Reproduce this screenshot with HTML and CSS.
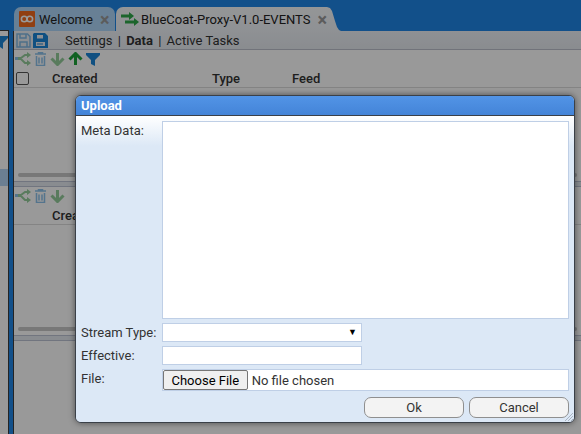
FILE: index.html
```html
<!DOCTYPE html>
<html lang="en">
<head>
    <meta charset="UTF-8">
    <title>Upload</title>
    <link rel="stylesheet" href="styles.css">
</head>
<body>
    <div class="app">
        <div class="side">
            <svg class="side-filter" width="8" height="14" viewBox="0 0 8 14"><path d="M-6 1h14v2l-5 5v6l-3-2V8L-6 3z" fill="#1c86d8"/></svg>
            <div class="side-sel"></div>
        </div>
        <div class="main">
            <div class="tabs">
                <div class="tab tab-welcome">
                    <svg width="16" height="16" viewBox="0 0 16 16"><rect width="16" height="16" rx="1" fill="#f0691e"/><circle cx="5.200" cy="8" r="2.800" fill="none" stroke="#fff" stroke-width="1.600"/><circle cx="10.800" cy="8" r="2.800" fill="none" stroke="#fff" stroke-width="1.600"/></svg>
                    <span class="tab-name">Welcome</span>
                    <span class="tab-x">×</span>
                </div>
                <div class="tab tab-active">
                    <svg width="18" height="14" viewBox="0 0 18 14"><path d="M0 2.500h8V0l5 4-5 4V5.500H0z" fill="#2fa84a"/><path d="M4 8.500h9V6l5 4-5 4v-2.500H4z" fill="#2fa84a"/></svg>
                    <span class="tab-name">BlueCoat-Proxy-V1.0-EVENTS</span>
                    <span class="tab-x">×</span>
                </div>
            </div>
            <div class="content">
                <div class="nav">
                    <svg class="save off" width="15" height="15" viewBox="0 0 15 15"><path d="M1 1h10.500L14 3.500V14H1z M4 1v4h6V1 M4 14V9h7v5" fill="none" stroke="currentColor" stroke-width="1.500"/></svg>
                    <svg class="save" width="15" height="15" viewBox="0 0 15 15"><path d="M1 0h11l3 3v12H0V1z M4 2v3.500h6V2z M3 9v4h9V9z" fill="currentColor" fill-rule="evenodd"/><path d="M4 11h6" stroke="currentColor"/></svg>
                    <span class="nav-link first">Settings</span>
                    <span class="nav-sep">|</span>
                    <b class="nav-link">Data</b>
                    <span class="nav-sep">|</span>
                    <span class="nav-link">Active Tasks</span>
                </div>
                <div class="pane pane-top">
                    <div class="icons">
                        <svg class="off" width="16" height="14" viewBox="0 0 16 14"><path d="M0 5h3v3H0z" fill="#1c86d8"/><path d="M3 6h3l4-3h3M3 7h3l4 4h3" fill="none" stroke="#2e9e3c" stroke-width="2"/><path d="M12 0l4 3-4 3zM12 8l4 3-4 3z" fill="#2e9e3c"/></svg>
                        <svg class="off" width="13" height="14" viewBox="0 0 13 14"><path d="M1 2h11M4.500 2V.5h4V2M2.500 4v9.500h8V4M5 5.500v6M8 5.500v6" fill="none" stroke="#1c86d8" stroke-width="1.500"/></svg>
                        <svg class="off" width="15" height="14" viewBox="0 0 15 14"><path d="M7.500 1v11M1.500 6.500l6 6 6-6" fill="none" stroke="#2e9e3c" stroke-width="3"/></svg>
                        <svg width="15" height="14" viewBox="0 0 15 14"><path d="M7.500 13V2M1.500 7.500l6-6 6 6" fill="none" stroke="#1fa33a" stroke-width="3"/></svg>
                        <svg width="14" height="14" viewBox="0 0 14 14"><path d="M0 1h14v2L9 8v6L5 12V8L0 3z" fill="#1c86d8"/></svg>
                    </div>
                    <div class="head">
                        <span class="check"></span>
                        <span class="col col-created">Created</span>
                        <span class="col col-type">Type</span>
                        <span class="col">Feed</span>
                    </div>
                </div>
                <div class="split"><div class="grip"></div><div class="band"></div></div>
                <div class="pane pane-bottom">
                    <div class="icons">
                        <svg class="off" width="16" height="14" viewBox="0 0 16 14"><path d="M0 5h3v3H0z" fill="#1c86d8"/><path d="M3 6h3l4-3h3M3 7h3l4 4h3" fill="none" stroke="#2e9e3c" stroke-width="2"/><path d="M12 0l4 3-4 3zM12 8l4 3-4 3z" fill="#2e9e3c"/></svg>
                        <svg class="off" width="13" height="14" viewBox="0 0 13 14"><path d="M1 2h11M4.500 2V.5h4V2M2.500 4v9.500h8V4M5 5.500v6M8 5.500v6" fill="none" stroke="#1c86d8" stroke-width="1.500"/></svg>
                        <svg class="off" width="15" height="14" viewBox="0 0 15 14"><path d="M7.500 1v11M1.500 6.500l6 6 6-6" fill="none" stroke="#2e9e3c" stroke-width="3"/></svg>
                    </div>
                    <div class="head head-plain">
                        <span class="col col-created">Created</span>
                    </div>
                </div>
                <div class="split"><div class="grip"></div><div class="band"></div></div>
            </div>
        </div>
    </div>

    <div class="glass"></div>

    <div class="dialog">
        <div class="dialog-title">Upload</div>
        <div class="dialog-body">
            <form class="fields">
                <label class="field-label">Meta Data:</label>
                <textarea class="input meta"></textarea>
                <label class="field-label">Stream Type:</label>
                <div class="input select">▼</div>
                <label class="field-label">Effective:</label>
                <input class="input short" type="text">
                <label class="field-label">File:</label>
                <input class="input file" type="file">
            </form>
            <div class="buttons">
                <button type="button" class="btn">Ok</button>
                <button type="button" class="btn">Cancel</button>
            </div>
        </div>
        <svg class="resize" width="10" height="10" viewBox="0 0 10 10"><path d="M9 1L1 9M9 4L4 9M9 7L7 9" stroke="#a9b4c2" fill="none"/></svg>
    </div>
</body>
</html>
```

FILE: styles.css
```css
html, body {
    margin: 0;
    height: 100%;
    overflow: hidden;
}
body {
    font-family: Roboto, sans-serif;
    font-size: 13px;
    color: #000;
    background-color: #1f85e6;
}
.app {
    display: flex;
    height: 434px;
}
.side {
    width: 8px;
    margin-top: 30px;
    background-color: #fff;
    border-top: 1px solid #3c3c3c;
    border-right: 1px solid #3c3c3c;
    display: flex;
    flex-direction: column;
}
.side-filter {
    margin-top: 4px;
}
.side-sel {
    height: 17px;
    margin-top: 120px;
    background-color: #b3d4f3;
}
.main {
    margin-left: 4px;
    flex: 1;
    min-width: 0;
    display: flex;
    flex-direction: column;
}
.tabs {
    display: flex;
    height: 24px;
    margin-top: 7px;
    margin-left: 1px;
    gap: 1px;
}
.tab {
    display: flex;
    align-items: center;
    border-radius: 7px 7px 0 0;
    font-size: 13px;
    white-space: nowrap;
    padding-left: 5px;
    box-sizing: border-box;
}
.tab-welcome {
    width: 101px;
    background-color: #aed6f8;
    gap: 4px;
}
.tab-active {
    width: 225px;
    background: linear-gradient(#f8fafc, #eef2f7);
    gap: 2px;
    clip-path: polygon(0 0, 211px 0, 214px 1px, 216px 4px, 219px 14px, 221px 20px, 223px 23px, 225px 24px, 0 24px);
}
.tab-name {
    color: #222;
}
.tab-x {
    color: #999;
    font-size: 18px;
    font-weight: bold;
    margin-left: 3px;
}
.tab-active .tab-x {
    margin-left: 5px;
}
.content {
    flex: 1;
    background-color: #fff;
    border-left: 1px solid #3c3c3c;
    display: flex;
    flex-direction: column;
}
.nav {
    height: 19px;
    box-sizing: border-box;
    background: linear-gradient(#eef2f7, #e6eaf0);
    border-bottom: 1px solid #bcc0cc;
    display: flex;
    align-items: center;
    padding-left: 2px;
    gap: 2px;
    color: #333;
}
.save {
    color: #1c86d8;
}
.off {
    opacity: .5;
}
.nav-link.first {
    margin-left: 15px;
}
.nav-sep {
    margin: 0 3.250px;
}
.icons {
    height: 18px;
    display: flex;
    align-items: center;
    padding-left: 1px;
    gap: 3px;
}
.head {
    height: 20px;
    box-sizing: border-box;
    display: flex;
    align-items: center;
    border-bottom: 1px solid #ddd;
    padding: 1px 0 0 2px;
    font-weight: 500;
    color: #333;
}
.head-plain {
    padding-left: 38px;
}
.check {
    width: 11px;
    height: 11px;
    border: 1px solid #555;
    border-radius: 2px;
}
.col-created {
    width: 160px;
}
.check + .col-created {
    margin-left: 23px;
}
.col-type {
    width: 80px;
}
.pane-top {
    height: 122px;
}
.pane-bottom {
    height: 139px;
}
.split {
    height: 15px;
    box-sizing: border-box;
    padding-top: 1px;
}
.grip {
    height: 4px;
    margin: 0 4px 4px 4px;
    background-color: #c8c8c8;
    border-radius: 2px;
}
.band {
    height: 6px;
    box-sizing: border-box;
    background-color: #e4e9f1;
    border-top: 1px solid #bcc4d4;
    border-bottom: 1px solid #bcc4d4;
}
.glass {
    position: absolute;
    inset: 0;
    background-color: rgba(0, 0, 0, .4);
}
.dialog {
    position: absolute;
    left: 75px;
    top: 95px;
    width: 500px;
    height: 328px;
    box-sizing: border-box;
    border: 1px solid #3a4048;
    border-radius: 6px;
    box-shadow: 0 0 6px rgba(0, 0, 0, .5);
    overflow: hidden;
    background-color: #dce8f6;
    display: flex;
    flex-direction: column;
}
.dialog-title {
    height: 19px;
    box-sizing: content-box;
    background: linear-gradient(#5294e6, #4484d8);
    border-bottom: 1px solid #3a4048;
    color: #fff;
    font-weight: bold;
    line-height: 20px;
    padding-left: 5px;
}
.dialog-body {
    flex: 1;
    background: linear-gradient(#fff, #dce8f6 30px);
    padding: 5px 5px 4px 5px;
    display: flex;
    flex-direction: column;
    color: #333;
}
.fields {
    display: grid;
    grid-template-columns: 81px 1fr;
    row-gap: 4px;
}
.field-label {
    line-height: 18px;
    padding-top: 1px;
}
.input {
    box-sizing: border-box;
    border: 1px solid #bfcfe6;
    background-color: #fff;
    margin: 0;
    font-family: Roboto, sans-serif;
    font-size: 13px;
    outline: none;
    display: block;
}
.meta {
    width: 100%;
    height: 198px;
    resize: none;
}
.select {
    width: 200px;
    height: 19px;
    text-align: right;
    font-size: 9px;
    line-height: 17px;
    padding-right: 4px;
    color: #000;
}
.short {
    width: 200px;
    height: 19px;
}
.file {
    width: 100%;
    height: 22px;
    padding: 0;
}
.file::file-selector-button {
    height: 20px;
    font-family: Roboto, sans-serif;
    font-size: 13px;
    margin: 0 4px 0 0;
    padding: 0 7.500px;
    border: 1px solid #767676;
    border-radius: 2px;
    background-color: #efefef;
}
.buttons {
    display: flex;
    justify-content: flex-end;
    gap: 5px;
    margin-top: 6px;
}
.btn {
    width: 100px;
    height: 21px;
    padding: 0;
    border: 1px solid #8f8f8f;
    border-radius: 7px;
    background-color: #f3f3f3;
    font-family: Roboto, sans-serif;
    font-size: 13px;
    color: #333;
}
.resize {
    position: absolute;
    right: 0;
    bottom: 0;
}
```
